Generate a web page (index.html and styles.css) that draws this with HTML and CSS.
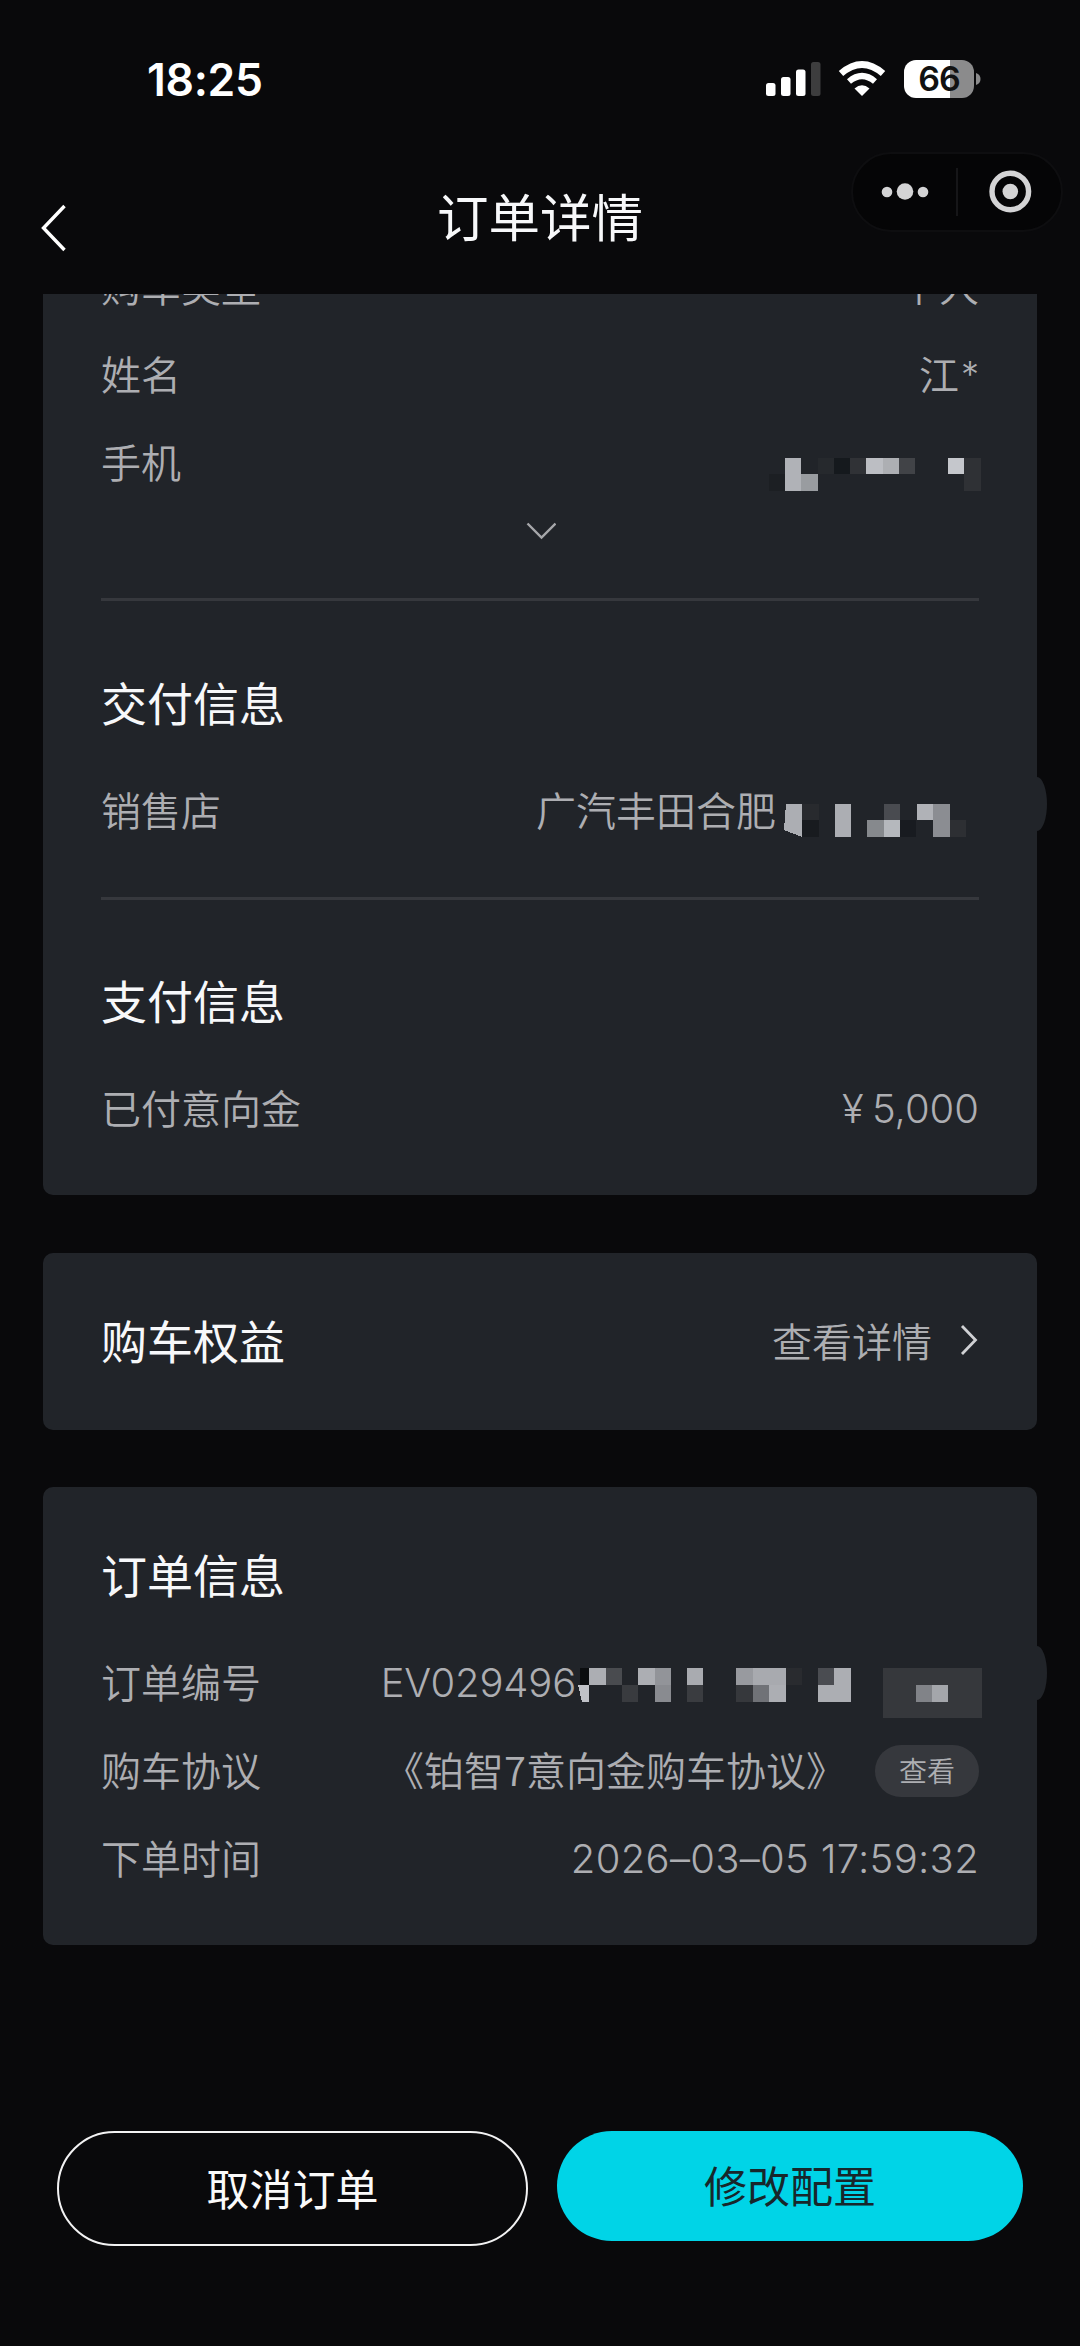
FILE: index.html
```html
<!DOCTYPE html>
<html lang="zh-CN">
<head>
<meta charset="utf-8">
<title>订单详情</title>
<link rel="stylesheet" href="styles.css">
</head>
<body>
<div class="phone">
  <header class="status">
    <span class="clock">18:25</span>
    <svg class="status-icons" width="216" height="40" viewBox="0 0 216 40">
      <g fill="#fff">
        <rect x="0" y="23" width="9.500" height="13" rx="2.500"/>
        <rect x="15" y="17" width="9.500" height="19" rx="2.500"/>
        <rect x="30" y="9.500" width="9.500" height="26.500" rx="2.500"/>
        <rect x="45" y="2" width="9.500" height="34" rx="2.500" fill="#3d3d3e"/>
        <path d="M96 36 88.500 28.500Q96 22 103.500 28.500Z"/>
      </g>
      <path d="M75 13.500Q96-4.500 117 13.500" fill="none" stroke="#fff" stroke-width="6.800"/>
      <path d="M83 21.500Q96 10.500 109 21.500" fill="none" stroke="#fff" stroke-width="6.200"/>
      <path d="M150 0h34v38h-34a12 12 0 0 1-12-12V12a12 12 0 0 1 12-12Z" fill="#fff"/>
      <path d="M184 0h12a12 12 0 0 1 12 12v14a12 12 0 0 1-12 12h-12Z" fill="#8b8b8c"/>
      <path d="M210 13q4.500 1.500 4.500 6t-4.500 6Z" fill="#8b8b8c"/>
      <text class="battery-text" x="173" y="31" text-anchor="middle">66</text>
    </svg>
  </header>

  <nav class="nav">
    <svg class="back" width="26" height="48" viewBox="0 0 26 48"><path d="M24.500 2 3.500 24 24.500 46" fill="none" stroke="#fff" stroke-width="3.400"/></svg>
    <h1 class="title">订单详情</h1>
    <div class="capsule">
      <svg width="212" height="80" viewBox="0 0 212 80">
        <rect x="1" y="1" width="210" height="78" rx="39" fill="#050506" stroke="#0e0e10" stroke-width="2"/>
        <path d="M106 16v48" stroke="#161618" stroke-width="2"/>
        <g fill="#d4d4d5"><circle cx="36" cy="40" r="5.300"/><circle cx="54" cy="39.500" r="8.300"/><circle cx="72" cy="40" r="5.300"/><circle cx="159.300" cy="39.500" r="7.800"/></g>
        <circle cx="159.300" cy="39.500" r="18.300" fill="none" stroke="#d4d4d5" stroke-width="5.400"/>
      </svg>
    </div>
  </nav>

  <main class="scroll">
    <section class="card card-main">
      <div class="row"><span>购车类型</span><span>个人</span></div>
      <div class="row"><span>姓名</span><span>江<span class="star">*</span></span></div>
      <div class="row"><span>手机</span>
        <svg class="mask mask-phone" width="214" height="33" viewBox="0 0 214 33" shape-rendering="crispEdges">
          <g fill="#1c1f23"><rect x="0" y="16" width="16" height="17"/><rect x="65" y="0" width="16" height="16" fill="#15191d"/></g>
          <path d="M16 0h16v33H16Z" fill="#b0b2b7"/><path d="M32 16h17v17H32Z" fill="#999ca0"/>
          <path d="M49 0h16v16H49Z" fill="#26292d"/><path d="M81 0h16v16H81Z" fill="#303236"/>
          <path d="M97 0h17v16H97Z" fill="#bcbec3"/><path d="M114 0h16v16h-16Z" fill="#adafb3"/>
          <path d="M130 0h16v16h-16Z" fill="#414347"/><path d="M179 0h16v16h-16Z" fill="#c5c7cc"/><path d="M195 0h17v33h-17Z" fill="#2f3135"/>
        </svg>
      </div>
      <div class="more"><svg width="32" height="20" viewBox="0 0 32 20"><path d="M3.500 2.500 17.500 16.500 31.500 2.500" fill="none" stroke="#a6a7aa" stroke-width="2.400"/></svg></div>
      <hr class="line">
      <h2 class="heading">交付信息</h2>
      <div class="row"><span>销售店</span>
        <span class="masked store">广汽丰田合肥
        <svg class="mask mask-store" width="199" height="37" viewBox="0 0 199 37" shape-rendering="crispEdges">
          <path d="M6 0h16v33L4 26Z" fill="#acaeb3"/><path d="M22 0h17v16H22Z" fill="#282a2e"/><path d="M22 16h17v17H22Z" fill="#181b1f"/>
          <path d="M55 0h16v33H55Z" fill="#acaeb3"/><path d="M87 16h17v17H87Z" fill="#86898d"/><path d="M104 0h16v16h-16Z" fill="#494b50"/><path d="M104 16h16v17h-16Z" fill="#b5b8bd"/><path d="M120 16h16v17h-16Z" fill="#181b20"/>
          <path d="M137 0h16v16h-16Z" fill="#b0b2b7"/><path d="M153 0h17v33h-17Z" fill="#8b8d92"/><path d="M170 16h16v17h-16Z" fill="#2d2f33"/>
        </svg></span>
      </div>
      <hr class="line">
      <h2 class="heading">支付信息</h2>
      <div class="row"><span>已付意向金</span><span class="num money">¥ 5,000</span></div>
      <i class="bump bump-store"></i>
    </section>

    <section class="card card-rights">
      <h2>购车权益</h2>
      <a class="link">查看详情<svg width="20" height="32" viewBox="0 0 20 32"><path d="M3 2 16.500 16 3 30" fill="none" stroke="#d0d1d4" stroke-width="2.800"/></svg></a>
    </section>

    <section class="card card-order">
      <h2 class="heading">订单信息</h2>
      <div class="row"><span>订单编号</span>
        <span class="masked num order-no">EV029496
        <svg class="mask mask-order" width="406" height="50" viewBox="0 0 406 50" shape-rendering="crispEdges">
          <path d="M4 0h9v17H4Z" fill="#0b0d0f"/><path d="M2 17h11v17H6Z" fill="#c0c2c7"/><path d="M13 0h17v17H13Z" fill="#acaeb3"/><path d="M30 0h16v17H30Z" fill="#494b4f"/>
          <path d="M46 17h16v17H46Z" fill="#393b3f"/><path d="M62 0h17v17H62Z" fill="#acaeb3"/><path d="M79 0h16v34H79Z" fill="#898b90"/><path d="M79 0h16v17H79Z" fill="#929499"/>
          <path d="M111 0h16v17h-16Z" fill="#a9abb0"/><path d="M111 17h16v17h-16Z" fill="#3a3c40"/>
          <path d="M160 0h17v17h-17Z" fill="#989a9f"/><path d="M177 0h33v17h-33Z" fill="#a8aaaf"/><path d="M160 17h17v17h-17Z" fill="#36383c"/><path d="M177 17h16v17h-16Z" fill="#707277"/><path d="M193 17h17v17h-17Z" fill="#acaeb3"/><path d="M210 0h16v17h-16Z" fill="#292b2f"/>
          <path d="M242 0h16v17h-16Z" fill="#4a4c51"/><path d="M258 0h17v34h-33V17h16Z" fill="#acaeb3"/>
          <path d="M307 0h99v50h-99Z" fill="#36383c"/><path d="M340 17h16v17h-16Z" fill="#818388"/><path d="M356 17h16v17h-16Z" fill="#a4a6ab"/>
        </svg></span>
      </div>
      <div class="row"><span>购车协议</span><span class="agreement"><span class="doc">《铂智7意向金购车协议》</span><span class="pill">查看</span></span></div>
      <div class="row"><span>下单时间</span><span class="num time">2026–03–05 17:59:32</span></div>
      <i class="bump bump-order"></i>
    </section>
  </main>

  <footer class="actions">
    <button class="btn btn-outline">取消订单</button>
    <button class="btn btn-solid">修改配置</button>
  </footer>
</div>
</body>
</html>
```
FILE: styles.css
```css
* { box-sizing: border-box; }
body { margin: 0; background: #09090b; color: #adaeb2; font: 350 40px/88px "Noto Sans CJK SC", sans-serif; }
svg { display: block; flex: none; }
h1, h2 { margin: 0; color: #f7f8fa; font-weight: 400; }
.phone { width: 1080px; height: 2346px; display: flex; flex-direction: column; overflow: hidden; }

.status { height: 154px; display: flex; justify-content: space-between; padding: 60px 98px 0 147px; }
.clock { font: 600 44.500px/41px Inter, sans-serif; color: #fff; letter-spacing: -0.3px; }
.status-icons { overflow: visible; }
.battery-text { font: 600 34px Inter, sans-serif; letter-spacing: -1px; fill: #111; }

.nav { height: 140px; display: grid; grid-template-columns: 212px 1fr 212px; padding: 0 17px 0 40px; }
.back { margin-top: 50px; }
.title { padding: 17px 23px 0 0; text-align: center; font-size: 51.500px; line-height: 88px; white-space: nowrap; }
.capsule { margin-top: -2px; }

.scroll { height: 1752px; overflow: hidden; padding: 0 43px; }
.card { position: relative; padding: 0 58px; background: #212429; border-radius: 10px; }
.card-main { display: flow-root; height: 931px; margin-top: -30px; }
.row { height: 88px; display: flex; justify-content: space-between; line-height: 85px; white-space: nowrap; }
.card-main .row:first-child { margin-top: -21px; }
.star { display: inline-block; margin-left: 2px; font: 350 36px/40px Inter, sans-serif; vertical-align: 3px; }
.num { font-family: Inter, "Noto Sans CJK SC", sans-serif; font-weight: 350; line-height: 88px; }
.order-no { letter-spacing: -0.200px; }
.money { word-spacing: -3px; }
.time { letter-spacing: 0.300px; }
.heading { height: 88px; font-size: 46px; line-height: 84px; }
.line { height: 3px; margin: 0; border: 0; background: #36383d; }
.more { height: 92px; display: flex; justify-content: center; padding-top: 14px; }
.more + .line { margin-top: -1px; }
.more + .line + .heading { margin-top: 58px; }
.row + .line { margin-top: 42px; }
.row + .line + .heading { margin-top: 57px; }
.heading + .row { margin-top: 20px; }
.mask-phone { margin: 39px -4px 0 0; }
.masked { display: flex; }
.mask-store { margin: 37px 0 0 4px; }
.mask-order { margin: 29px -3px 0 0; }

.card-rights { height: 177px; margin-top: 58px; display: flex; justify-content: space-between; align-items: center; }
.card-rights h2 { font-size: 46px; line-height: 88px; padding-bottom: 6px; }
.link { display: flex; align-items: center; gap: 27px; line-height: 84px; padding-bottom: 3px; }

.card-order { height: 458px; margin-top: 57px; padding-top: 44px; }
.agreement { display: flex; gap: 29px; }
.pill { width: 104px; height: 52px; margin-top: 18px; border-radius: 26px; background: #36383d; font-size: 28px; line-height: 51px; text-align: center; }
.bump { position: absolute; right: -10px; width: 10px; height: 54px; background: #212429; border-radius: 0 10px 10px 0 / 0 27px 27px 0; }
.bump-store { top: 513px; }
.bump-order { top: 159px; }

.actions { display: flex; align-items: flex-start; gap: 29px; padding: 85px 57px 0; }
.btn { padding: 0; font: 400 43px/104px "Noto Sans CJK SC", sans-serif; border-radius: 58px; }
.btn-outline { width: 471px; height: 115px; padding-bottom: 3px; color: #fafafa; background: none; border: 2.500px solid #f2f2f3; }
.btn-solid { width: 466px; height: 110px; padding-bottom: 4px; color: #17272b; background: #00d4e7; border: 0; }
```
